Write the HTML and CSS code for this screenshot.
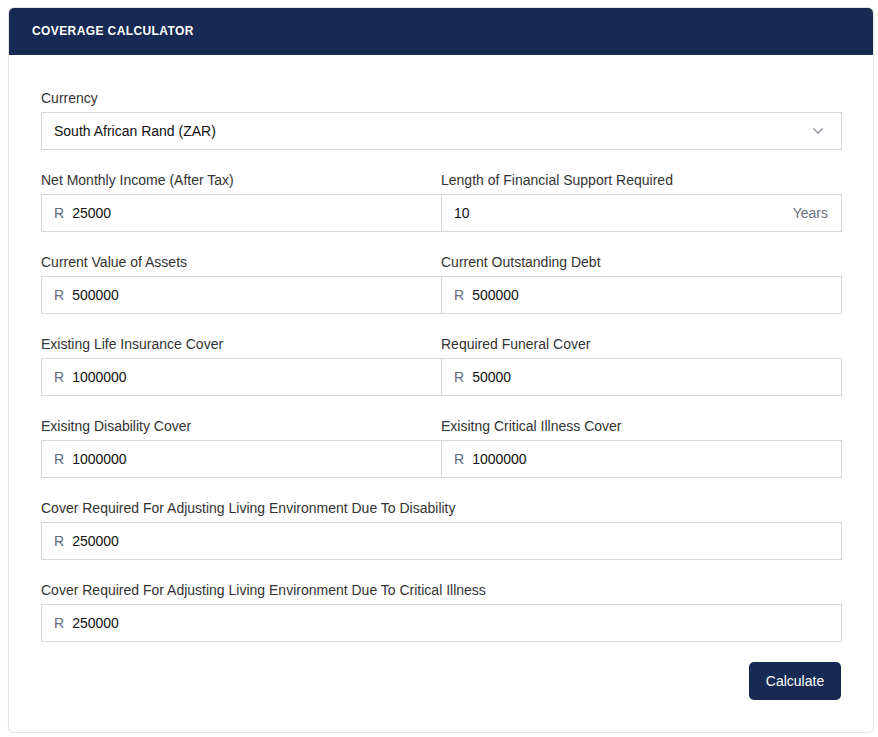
FILE: index.html
```html
<!DOCTYPE html>
<html>
<head>
<meta charset="utf-8">
<link rel="stylesheet" href="styles.css">
</head>
<body>
<div class="card">
  <div class="card-header">Coverage Calculator</div>
  <div class="card-body">
    <div class="field">
      <label class="label">Currency</label>
      <div class="select">
        <span class="value">South African Rand (ZAR)</span>
        <svg class="chev" width="12" height="8" viewBox="0 0 12 8"><path d="M1.5 1.5 L6 6 L10.5 1.5" fill="none" stroke="#9a9ea6" stroke-width="1.6"/></svg>
      </div>
    </div>
    <div class="grid">
      <div class="field">
        <label class="label">Net Monthly Income (After Tax)</label>
        <div class="input"><span class="prefix">R</span><span class="value">25000</span></div>
      </div>
      <div class="field right">
        <label class="label">Length of Financial Support Required</label>
        <div class="input"><span class="value">10</span><span class="suffix">Years</span></div>
      </div>
      <div class="field">
        <label class="label">Current Value of Assets</label>
        <div class="input"><span class="prefix">R</span><span class="value">500000</span></div>
      </div>
      <div class="field right">
        <label class="label">Current Outstanding Debt</label>
        <div class="input"><span class="prefix">R</span><span class="value">500000</span></div>
      </div>
      <div class="field">
        <label class="label">Existing Life Insurance Cover</label>
        <div class="input"><span class="prefix">R</span><span class="value">1000000</span></div>
      </div>
      <div class="field right">
        <label class="label">Required Funeral Cover</label>
        <div class="input"><span class="prefix">R</span><span class="value">50000</span></div>
      </div>
      <div class="field">
        <label class="label">Exisitng Disability Cover</label>
        <div class="input"><span class="prefix">R</span><span class="value">1000000</span></div>
      </div>
      <div class="field right">
        <label class="label">Exisitng Critical Illness Cover</label>
        <div class="input"><span class="prefix">R</span><span class="value">1000000</span></div>
      </div>
    </div>
    <div class="field">
      <label class="label">Cover Required For Adjusting Living Environment Due To Disability</label>
      <div class="input"><span class="prefix">R</span><span class="value">250000</span></div>
    </div>
    <div class="field">
      <label class="label">Cover Required For Adjusting Living Environment Due To Critical Illness</label>
      <div class="input"><span class="prefix">R</span><span class="value">250000</span></div>
    </div>
    <div class="actions">
      <button class="btn">Calculate</button>
    </div>
  </div>
</div>
</body>
</html>
```

FILE: styles.css
```css
* { box-sizing: border-box; }
html, body { margin: 0; padding: 0; background: #ffffff; }
body {
  font-family: "Liberation Sans", Arial, sans-serif;
  font-size: 14px;
  color: #333;
  padding: 7px 4px 0 8px;
}
.card {
  width: 866px;
  height: 726px;
  border: 1px solid #e4e4e6;
  border-radius: 6px;
  box-shadow: 0 1px 2px rgba(0,0,0,0.06);
  overflow: hidden;
  background: #fff;
}
.card-header {
  background: #172a54;
  color: #fff;
  height: 48px;
  margin: -1px -1px 0 -1px;
  padding: 0 24px;
  display: flex;
  align-items: center;
  font-size: 12px;
  font-weight: bold;
  text-transform: uppercase;
  letter-spacing: 0.4px;
}
.card-body {
  padding: 33px 31px 32px 32px;
}
.field {
  display: flex;
  flex-direction: column;
  margin-bottom: 20px;
}
.label {
  line-height: 20px;
  height: 20px;
  margin-bottom: 4px;
  color: #333;
}
.select, .input {
  height: 38px;
  border: 1px solid #d5d6dc;
  display: flex;
  align-items: center;
  padding: 0 13px 0 12px;
  color: #111;
  background: #fff;
}
.select { justify-content: space-between; padding-right: 17px; }
.chev { display: block; }
.grid {
  display: grid;
  grid-template-columns: 401px 400px;
}
.right .input, .right .label { margin-left: -1px; }
.prefix { color: #5d6b7c; margin-right: 8px; }
.value { color: #111; }
.suffix { margin-left: auto; color: #6a7280; }
.actions {
  display: flex;
  justify-content: flex-end;
  padding-right: 1px;
}
.btn {
  width: 92px;
  height: 38px;
  background: #172a54;
  color: #fff;
  border: none;
  border-radius: 5px;
  font-family: "Liberation Sans", Arial, sans-serif;
  font-size: 14px;
  cursor: pointer;
}
```
